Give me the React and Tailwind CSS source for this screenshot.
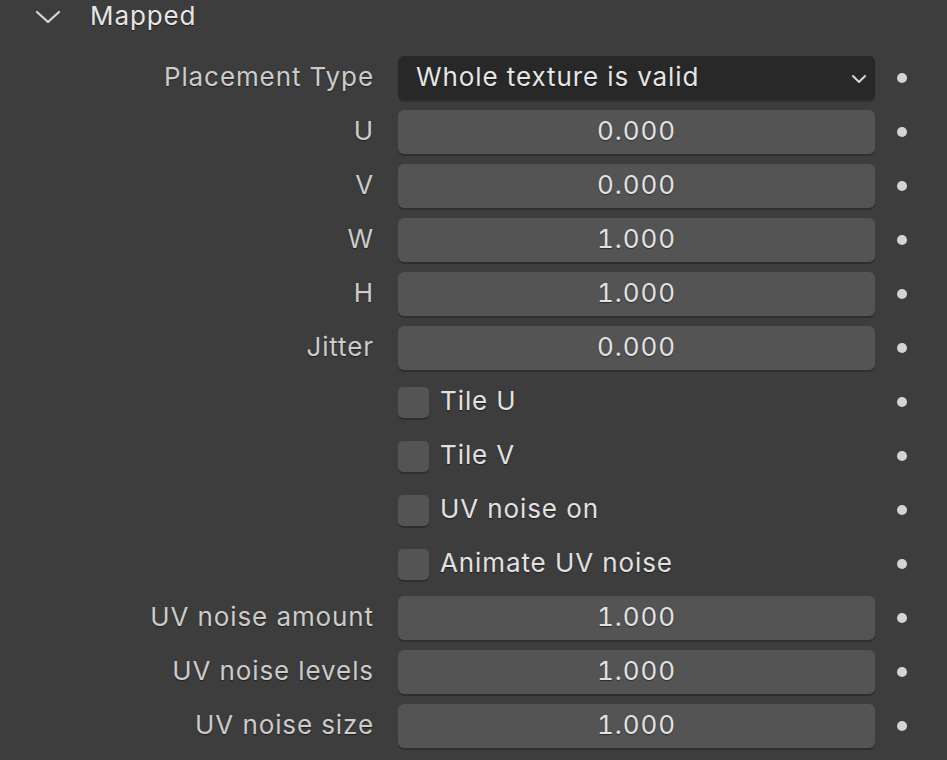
import React from "react";

const rows = [
  { label: "U", value: "0.000" },
  { label: "V", value: "0.000" },
  { label: "W", value: "1.000" },
  { label: "H", value: "1.000" },
  { label: "Jitter", value: "0.000" },
];

const checks = ["Tile U", "Tile V", "UV noise on", "Animate UV noise"];

const noise = [
  { label: "UV noise amount", value: "1.000" },
  { label: "UV noise levels", value: "1.000" },
  { label: "UV noise size", value: "1.000" },
];

const Dot = () => (
  <div className="w-[44px] flex justify-center">
    <div className="w-[10px] h-[10px] rounded-full bg-[#d4d4d4]" />
  </div>
);

const Row = ({ label, children }) => (
  <div className="h-[54px] flex items-center">
    <div className="w-[374px] pb-[3px] text-right whitespace-nowrap text-[#cccccc] [text-shadow:0_1px_1px_rgba(0,0,0,0.5)]">
      {label}
    </div>
    <div className="w-[24px]" />
    <div className="w-[477px]">{children}</div>
    <div className="w-[5px]" />
    <Dot />
  </div>
);

const NumField = ({ value }) => (
  <div className="h-[44px] pb-[3px] rounded-[6px] bg-[#545454] shadow-[0_2px_0_#2e2e2e] flex items-center justify-center tabular-nums text-[#e2e2e2] [text-shadow:0_1px_1px_rgba(0,0,0,0.5)]">
    {value}
  </div>
);

export default function App() {
  return (
    <div
      className="w-[947px] h-[760px] bg-[#3d3d3d] overflow-hidden text-[26px] tracking-[0.9px]"
      style={{ fontFamily: "Inter, 'Noto Sans', sans-serif" }}
    >
      <div className="h-[34px] flex items-center">
        <svg className="ml-[35px] w-[26px] h-[16px]" viewBox="0 0 26 16" fill="none">
          <path d="M2 3 L13 13 L24 3" stroke="#d8d8d8" strokeWidth="2.2" strokeLinecap="round" strokeLinejoin="round" />
        </svg>
        <span className="ml-[29px] pb-[3px] text-[26px] text-[#e6e6e6] [text-shadow:0_1px_1px_rgba(0,0,0,0.5)]">
          Mapped
        </span>
      </div>
      <div className="pt-[17px]">
        <Row label="Placement Type">
          <div className="h-[44px] rounded-[6px] bg-[#282828] shadow-[0_2px_0_#2f2f2f] flex items-center pl-[18px] pr-[8px] text-[#e6e6e6] [text-shadow:0_1px_1px_rgba(0,0,0,0.5)]">
            <span className="flex-1 pb-[3px] whitespace-nowrap">Whole texture is valid</span>
            <svg className="w-[16px] h-[10px] mt-[2px]" viewBox="0 0 16 10" fill="none">
              <path d="M2 2 L8 8 L14 2" stroke="#d8d8d8" strokeWidth="2" strokeLinecap="round" strokeLinejoin="round" />
            </svg>
          </div>
        </Row>
        {rows.map((r) => (
          <Row key={r.label} label={r.label}>
            <NumField value={r.value} />
          </Row>
        ))}
        {checks.map((c) => (
          <Row key={c} label="">
            <div className="flex items-center">
              <div className="w-[31px] h-[31px] rounded-[5px] bg-[#545454] shadow-[0_2px_0_#2e2e2e]" />
              <span className="ml-[11px] pb-[3px] whitespace-nowrap text-[#e2e2e2] [text-shadow:0_1px_1px_rgba(0,0,0,0.5)]">{c}</span>
            </div>
          </Row>
        ))}
        {noise.map((r) => (
          <Row key={r.label} label={r.label}>
            <NumField value={r.value} />
          </Row>
        ))}
      </div>
    </div>
  );
}
